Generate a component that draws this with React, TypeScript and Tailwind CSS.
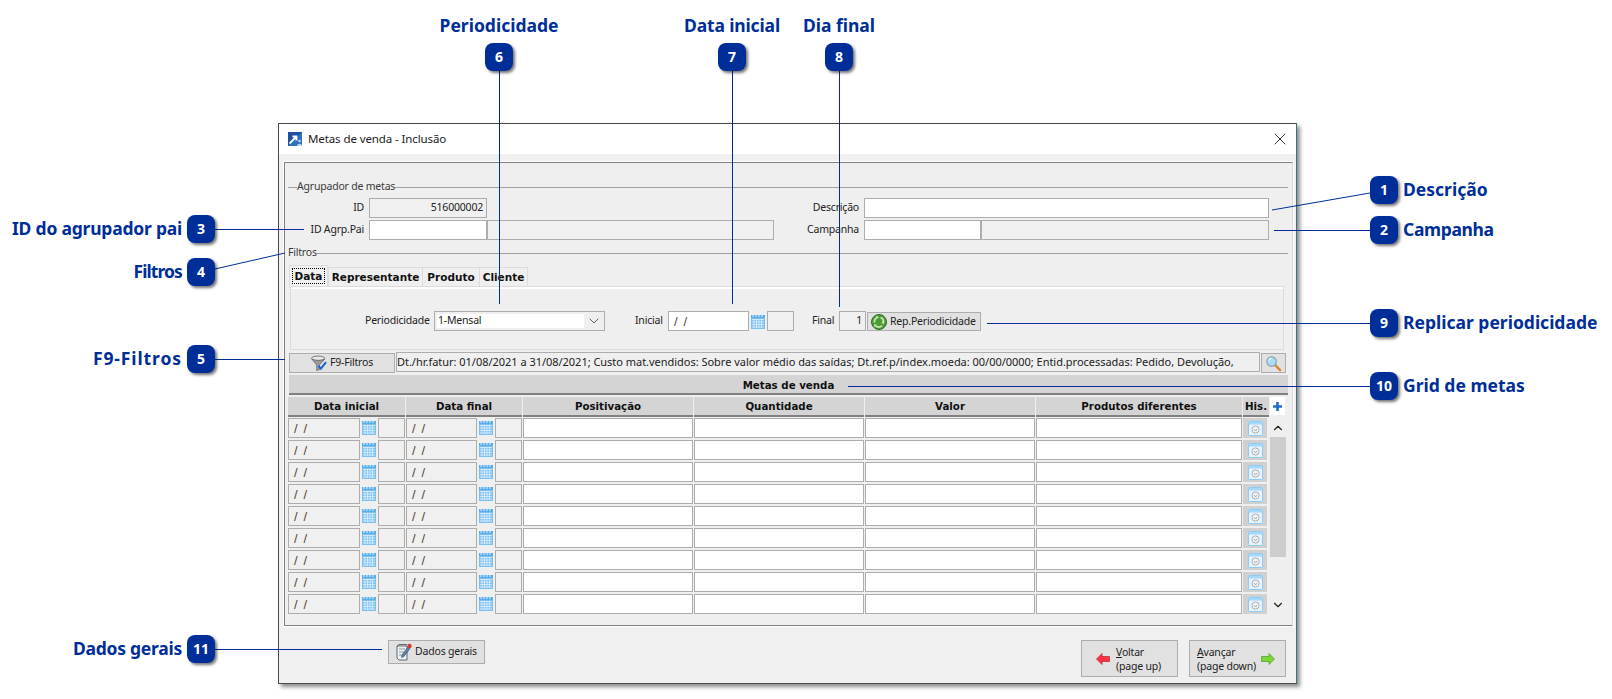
import { ChevronDown, ChevronUp, X } from "lucide-react";

const callouts = [
  { n: "1", x: 1370, y: 176, label: "Descrição", side: "right", cls: "tracking-normal" },
  { n: "2", x: 1370, y: 216, label: "Campanha", side: "right", cls: "tracking-[-0.35px]" },
  { n: "3", x: 187, y: 215, label: "ID do agrupador pai", side: "left", cls: "tracking-[-0.22px]" },
  { n: "4", x: 187, y: 258, label: "Filtros", side: "left", cls: "tracking-[-0.9px]" },
  { n: "5", x: 187, y: 345, label: "F9-Filtros", side: "left", cls: "tracking-[0.9px]" },
  { n: "6", x: 485, y: 43, label: "Periodicidade", side: "top", cls: "tracking-normal" },
  { n: "7", x: 718, y: 43, label: "Data inicial", side: "top", cls: "tracking-[-0.15px]" },
  { n: "8", x: 825, y: 43, label: "Dia final", side: "top", cls: "tracking-normal" },
  { n: "9", x: 1370, y: 309, label: "Replicar periodicidade", side: "right", cls: "tracking-normal" },
  { n: "10", x: 1370, y: 372, label: "Grid de metas", side: "right", cls: "tracking-normal" },
  { n: "11", x: 187, y: 635, label: "Dados gerais", side: "left", cls: "tracking-[-0.25px]" },
];

const leaders = [
  [1370, 193, 1272, 210],
  [1370, 230.5, 1274, 230.5],
  [215, 229.5, 304, 229.5],
  [215, 269, 285, 253],
  [215, 359.5, 285, 359.5],
  [499.5, 71, 499.5, 304],
  [732.5, 71, 732.5, 304],
  [839.5, 71, 839.5, 307],
  [1370, 323.5, 987, 323.5],
  [1370, 386.5, 848, 386.5],
  [215, 649.5, 382, 649.5],
];

const rows = [0, 1, 2, 3, 4, 5, 6, 7, 8];

const CalendarIcon = () => (
  <svg width="14" height="15" viewBox="0 0 14 15" className="shrink-0">
    <rect x="0" y="1" width="14" height="14" fill="#7cc0f0" />
    <rect x="0" y="1" width="14" height="3" fill="#58ace8" />
    <path d="M2 0v3M5 0v3M8 0v3M11 0v3" stroke="#e4f2fc" strokeWidth="1" />
    <path d="M1 5.500h12M1 8h12M1 10.500h12M1 13h12M3 5v9M5.500 5v9M8 5v9M10.500 5v9" stroke="#dcefFC" strokeWidth="0.8" />
  </svg>
);

const HistoryIcon = () => (
  <svg width="15" height="15" viewBox="0 0 15 15">
    <rect x="0.500" y="0.500" width="14" height="14" rx="1" fill="#e6f3fd" stroke="#8ccbf8" />
    <rect x="1" y="1" width="13" height="2.500" fill="#a6d8fb" />
    <circle cx="7.500" cy="8.500" r="3.600" fill="#eef2f5" stroke="#a9b2ba" />
    <path d="M6 8l1.500 2L9 8" fill="none" stroke="#a0a8b0" strokeWidth="0.9" />
  </svg>
);

const WindowIcon = () => (
  <svg width="14" height="14" viewBox="0 0 14 14" className="shrink-0">
    <rect width="14" height="14" fill="#1f4f9f" />
    <path d="M0 14L14 0v14z" fill="#2e6fbe" />
    <path d="M1.500 11.500L8 5M4.500 4.500H8.500V8.500" fill="none" stroke="#fff" strokeWidth="1.800" />
    <circle cx="11.500" cy="9" r="1.300" fill="#bcd4ee" />
    <path d="M9 14c0-3 5-3 5 0z" fill="#bcd4ee" />
  </svg>
);

const FunnelIcon = () => (
  <svg width="16" height="17" viewBox="0 0 17 17" className="shrink-0">
    <ellipse cx="7.500" cy="3" rx="7" ry="2.400" fill="#e8e8e8" stroke="#6f6f6f" />
    <path d="M1 4l5 6v6l3-1v-5l5.500-6c-3 1.500-10 1.500-13.500 0z" fill="#9c9c9c" stroke="#5e5e5e" strokeWidth="0.7" />
    <path d="M8 11l2.500 3L16 7" fill="none" stroke="#1769d2" strokeWidth="2.200" />
  </svg>
);

const RecycleIcon = () => (
  <svg width="16" height="16" viewBox="0 0 16 16" className="shrink-0">
    <circle cx="8" cy="8" r="7.500" fill="#4e9a38" stroke="#2e6d22" />
    <path d="M3.500 8.500a4.500 4.500 0 0 1 3-5M9.500 3.500a4.500 4.500 0 0 1 3 4.500M11 11.500a4.500 4.500 0 0 1-6 .5" fill="none" stroke="#bfe8a6" strokeWidth="1.800" />
    <path d="M5.500 1.500l2.500 2-3 1.500zM13.800 7.500l-1.500 3-2-2.500zM3.500 13.500l-.5-3.500 3 1z" fill="#bfe8a6" />
  </svg>
);

const SearchIcon = () => (
  <svg width="17" height="17" viewBox="0 0 18 18">
    <path d="M10.500 10.500L16 16" stroke="#d98a2b" strokeWidth="2.600" strokeLinecap="round" />
    <circle cx="7" cy="7" r="5" fill="#a9dcf7" stroke="#8aa0ae" strokeWidth="1.200" />
    <path d="M4 6a3.500 3.500 0 0 1 3-2.500" fill="none" stroke="#fff" strokeWidth="1.200" />
  </svg>
);

const NotesIcon = () => (
  <svg width="16" height="18" viewBox="0 0 16 18" className="shrink-0">
    <path d="M1 3h10v14H3l-2-2z" fill="#eef1f4" stroke="#5d6670" />
    <path d="M3 6h6M3 9h6M3 12h5" stroke="#8d97a1" />
    <path d="M1 3l2-1.500h8" fill="none" stroke="#5d6670" />
    <path d="M6 12l6-8 2 1.500-6 8-2.500 1z" fill="#5f7fa8" stroke="#3a4f6f" strokeWidth="0.6" />
    <circle cx="13.500" cy="3" r="2.200" fill="#d83a2e" />
  </svg>
);

const ArrowIcon = ({ dir }: { dir: "left" | "right" }) => (
  <svg width="14" height="12" viewBox="0 0 14 12" className="shrink-0">
    {dir === "left" ? (
      <path d="M0.500 6L6 0.500V3.500H13.500V8.500H6V11.500z" fill="#ff3346" stroke="#c2242d" strokeWidth="0.7" />
    ) : (
      <path d="M13.500 6L8 0.500V3.500H0.500V8.500H8V11.500z" fill="#7bd63a" stroke="#4b9c1c" strokeWidth="0.7" />
    )}
  </svg>
);

const Box = ({ w, white, children, right }: { w: string; white?: boolean; children?: React.ReactNode; right?: boolean }) => (
  <div
    className={`${w} h-[20px] shrink-0 border border-[#adadad] flex items-center px-[3px] pb-[2px] overflow-hidden ${
      white ? "bg-white" : "bg-[#f0f0f0]"
    } ${right ? "justify-end" : ""}`}
  >
    {children}
  </div>
);

const Slashes = () => (
  <span className="flex gap-[6px] pl-[2px] pt-[2px] text-[13px] text-[#5a4632] font-['Liberation_Sans']">
    <span>/</span>
    <span>/</span>
  </span>
);

const GroupTitle = ({ text, lead }: { text: string; lead?: boolean }) => (
  <div className="flex items-center h-[14px] ml-[3px] mr-[4px]">
    {lead && <div className="w-[9px] h-px bg-[#a0a0a0]" />}
    <span className="shrink-0 text-[#3a3a3a] pb-px">{text}</span>
    <div className="flex-1 h-px bg-[#a0a0a0]" />
  </div>
);

const Header = ({ w, text }: { w: string; text: string }) => (
  <div className={`${w} h-[20px] shrink-0 bg-[#d4d4d4] border-b-2 border-[#808080] flex items-center justify-center pt-px font-bold text-[#111] font-['DejaVu_Sans'] text-[10.250px] tracking-normal`}>
    {text}
  </div>
);

const GridRow = () => (
  <div className="flex h-[20px] w-[980px]">
    <Box w="w-[72px]"><Slashes /></Box>
    <div className="ml-[2px] mt-[2px]"><CalendarIcon /></div>
    <div className="ml-[2px]"><Box w="w-[27px]" /></div>
    <div className="ml-[1px]"><Box w="w-[71px]"><Slashes /></Box></div>
    <div className="ml-[2px] mt-[2px]"><CalendarIcon /></div>
    <div className="ml-[2px]"><Box w="w-[27px]" /></div>
    <div className="ml-[1px]"><Box w="w-[170px]" white /></div>
    <div className="ml-[1px]"><Box w="w-[170px]" white /></div>
    <div className="ml-[1px]"><Box w="w-[170px]" white /></div>
    <div className="ml-[1px]"><Box w="w-[206px]" white /></div>
    <div className="ml-[1px] w-[24px] h-[20px] bg-[#d0d0d0] flex items-center justify-center"><HistoryIcon /></div>
  </div>
);

const Annotations = () => (
  <>
    <svg width="1612" height="699" className="absolute left-0 top-0">
      {leaders.map((l, i) => (
        <line key={i} x1={l[0]} y1={l[1]} x2={l[2]} y2={l[3]} stroke="#002e98" strokeWidth="1" />
      ))}
    </svg>
    {callouts.map((c) => (
      <div key={c.n}>
        <div
          className="absolute w-[28px] h-[28px] rounded-[8px] bg-[#002e98] shadow-[2px_2px_3px_rgba(0,0,0,0.55)] flex items-center justify-center text-white font-bold text-[14px] tracking-normal"
          style={{ left: c.x, top: c.y }}
        >
          {c.n}
        </div>
        {c.side === "right" && (
          <div className={`absolute h-[28px] flex items-center whitespace-nowrap text-[#002e98] font-bold text-[17.500px] ${c.cls}`} style={{ left: c.x + 33, top: c.y }}>
            {c.label}
          </div>
        )}
        {c.side === "left" && (
          <div className={`absolute h-[28px] flex items-center justify-end w-[180px] whitespace-nowrap text-[#002e98] font-bold text-[17.500px] ${c.cls}`} style={{ left: c.x - 185, top: c.y }}>
            {c.label}
          </div>
        )}
        {c.side === "top" && (
          <div className={`absolute h-[28px] flex items-center justify-center w-[200px] whitespace-nowrap text-[#002e98] font-bold text-[17.500px] ${c.cls}`} style={{ left: c.x - 86, top: c.y - 31 }}>
            {c.label}
          </div>
        )}
      </div>
    ))}
  </>
);

export default function App() {
  return (
    <div className="relative w-[1612px] h-[699px] bg-white overflow-hidden pl-[278px] pt-[123px] font-['Noto_Sans',sans-serif] text-[10.500px] tracking-[-0.2px] leading-none text-[#222]">
      <div className="w-[1019px] h-[561px] flex flex-col border border-[#4a4a4a] border-r-[#3f6f78] shadow-[3px_3px_4px_rgba(0,0,0,0.45)]">
        <div className="h-[30px] bg-white flex items-center pl-[9px] pr-[6px] shrink-0">
          <WindowIcon />
          <span className="ml-[6px] text-[11.500px] tracking-[-0.1px] text-[#222]">Metas de venda - Inclusão</span>
          <X size={20} strokeWidth={1.1} className="ml-auto text-[#222]" />
        </div>

        <div className="flex-1 bg-[#f0f0f0] pl-[5px] pr-[3px] pt-[8px]">
          <div className="h-[464px] bg-[#efefef] border border-[#808080] border-r-[#d8d8d8] border-b-[#808080] outline outline-white">
            <div className="mt-[17px]">
              <GroupTitle text="Agrupador de metas" lead />
            </div>

            <div className="flex items-center mt-[4px]">
              <div className="w-[79px] text-right mr-[5px] pb-[2px]">ID</div>
              <Box w="w-[118px]" right>516000002</Box>
              <div className="w-[287px]" />
              <div className="w-[85px] text-right mr-[5px] pb-[2px]">Descrição</div>
              <Box w="w-[405px]" white />
            </div>

            <div className="flex items-center mt-[2px]">
              <div className="w-[79px] text-right mr-[5px] pb-[2px]">ID Agrp.Pai</div>
              <Box w="w-[118px]" white />
              <Box w="w-[287px]" />
              <div className="w-[85px] text-right mr-[5px] pb-[2px]">Campanha</div>
              <Box w="w-[117px]" white />
              <Box w="w-[288px]" />
            </div>

            <div className="mt-[6px]">
              <GroupTitle text="Filtros" />
            </div>

            <div className="flex items-end ml-[4px] mt-[5px] h-[21px] font-['DejaVu_Sans'] font-bold text-[10.500px] tracking-normal text-[#111]">
              <div className="w-[39px] h-[21px] bg-[#f0f0f0] border border-b-0 border-[#dcdcdc] p-[2px]">
                <div className="h-full border border-dotted border-black flex items-center justify-center">Data</div>
              </div>
              <div className="w-[95px] h-[19px] border border-b-0 border-[#dcdcdc] flex items-center justify-center">Representante</div>
              <div className="w-[57px] h-[19px] border border-b-0 border-l-0 border-[#dcdcdc] flex items-center justify-center">Produto</div>
              <div className="w-[48px] h-[19px] border border-b-0 border-l-0 border-[#dcdcdc] flex items-center justify-center">Cliente</div>
            </div>

            <div className="ml-[5px] w-[994px] h-[64px] border border-[#dcdcdc] shadow-[inset_0_2px_0_#ffffff] pt-[24px] pl-[74px] flex items-start">
              <div className="w-[64px] h-[20px] flex items-center shrink-0 mr-[5px] pb-[2px]">Periodicidade</div>
              <div className="w-[171px] h-[20px] shrink-0 border border-[#adadad] p-[2px] flex items-center">
                <div className="w-[148px] h-full bg-white flex items-center pl-[1px] pb-[2px]">1-Mensal</div>
                <ChevronDown size={16} strokeWidth={1.1} className="ml-[2px] text-[#222]" />
              </div>
              <div className="w-[27px] h-[20px] flex items-center shrink-0 ml-[30px] mr-[6px] pb-[2px]">Inicial</div>
              <Box w="w-[81px]" white><Slashes /></Box>
              <div className="ml-[2px] mt-[3px]"><CalendarIcon /></div>
              <div className="ml-[2px]"><Box w="w-[27px]" /></div>
              <div className="w-[22px] h-[20px] flex items-center shrink-0 ml-[18px] mr-[5px] pb-[2px]">Final</div>
              <Box w="w-[27px]" right>1</Box>
              <div className="ml-[1px] w-[114px] h-[19px] mt-[1px] shrink-0 bg-[#e1e1e1] border border-[#adadad] flex items-center pl-[3px] gap-[3px]">
                <RecycleIcon />
                <span>Rep.Periodicidade</span>
              </div>
            </div>

            <div className="flex items-start ml-[4px] mt-[2px] h-[21px]">
              <div className="w-[106px] h-[20px] mt-[1px] shrink-0 bg-[#e1e1e1] border border-[#adadad] flex items-center justify-center gap-[3px]">
                <FunnelIcon />
                <span className="pb-px">F9-Filtros</span>
              </div>
              <div className="ml-[1px] w-[864px] h-[20px] shrink-0 border border-[#adadad] overflow-hidden whitespace-nowrap flex items-center text-[11px] tracking-[-0.025px] pb-px">
                Dt./hr.fatur: 01/08/2021 a 31/08/2021; Custo mat.vendidos: Sobre valor médio das saídas; Dt.ref.p/index.moeda: 00/00/0000; Entid.processadas: Pedido, Devolução,
              </div>
              <div className="ml-[1px] w-[25px] h-[20px] mt-[1px] shrink-0 border border-[#adadad] bg-[#e1e1e1] flex items-center justify-center">
                <SearchIcon />
              </div>
            </div>

            <div className="ml-[4px] mt-[2px] w-[999px] h-[20px] bg-[#d4d4d4] border-b-2 border-[#808080] flex items-center justify-center pt-[2px] font-['DejaVu_Sans'] font-bold text-[10.250px] tracking-normal text-[#111]">
              Metas de venda
            </div>

            <div className="flex ml-[3px] mt-[2px] gap-px">
              <Header w="w-[117px]" text="Data inicial" />
              <Header w="w-[116px]" text="Data final" />
              <Header w="w-[170px]" text="Positivação" />
              <Header w="w-[170px]" text="Quantidade" />
              <Header w="w-[170px]" text="Valor" />
              <Header w="w-[206px]" text="Produtos diferentes" />
              <Header w="w-[26px]" text="His." />
              <div className="w-[15px] h-[18px] flex items-center justify-center bg-white">
                <svg width="11" height="11" viewBox="0 0 11 11">
                  <path d="M5.500 1v9M1 5.500h9" stroke="#1f6fc8" strokeWidth="2.600" />
                </svg>
              </div>
            </div>

            <div className="flex ml-[3px] mt-[1px]">
              <div className="flex flex-col gap-[2px] w-[982px]">
                {rows.map((r) => (
                  <GridRow key={r} />
                ))}
              </div>
              <div className="w-[16px] h-[196px] flex flex-col items-center">
                <div className="h-[19px] flex items-center"><ChevronUp size={14} strokeWidth={2} className="text-[#222]" /></div>
                <div className="w-[16px] h-[120px] bg-[#cdcdcd]" />
                <div className="mt-auto h-[19px] flex items-center"><ChevronDown size={14} strokeWidth={2} className="text-[#222]" /></div>
              </div>
            </div>
          </div>

          <div className="flex mt-[14px]">
            <div className="ml-[104px] w-[97px] h-[24px] bg-[#e1e1e1] border border-[#adadad] flex items-center justify-center gap-[3px]">
              <NotesIcon />
              <span className="pb-px">Dados gerais</span>
            </div>
            <div className="ml-auto mr-[11px] w-[97px] h-[37px] bg-[#e1e1e1] border border-[#adadad] flex items-center pl-[14px] gap-[6px]">
              <ArrowIcon dir="left" />
              <div className="leading-[14px]"><u>V</u>oltar<br />(page up)</div>
            </div>
            <div className="mr-[7px] w-[97px] h-[37px] bg-[#e1e1e1] border border-[#adadad] flex items-center pl-[7px] gap-[5px]">
              <div className="leading-[14px]"><u>A</u>vançar<br />(page down)</div>
              <ArrowIcon dir="right" />
            </div>
          </div>
        </div>
      </div>

      <Annotations />
    </div>
  );
}
